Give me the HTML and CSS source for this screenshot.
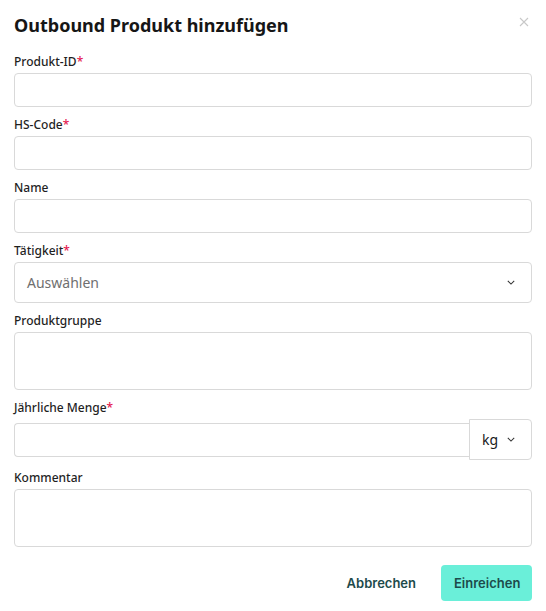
FILE: index.html
```html
<!DOCTYPE html>
<html lang="de">
<head>
<meta charset="utf-8">
<link rel="stylesheet" href="styles.css">
</head>
<body>
<div class="modal">
  <div class="header">
    <h1 class="title">Outbound Produkt hinzufügen</h1>
    <button class="close" aria-label="Schließen">
      <svg width="10" height="10" viewBox="0 0 10 10"><path d="M1 1L9 9M9 1L1 9" stroke="#c8c8c8" stroke-width="1.1" fill="none"/></svg>
    </button>
  </div>
  <form class="form">
    <div class="field">
      <label class="label">Produkt-ID<span class="req">*</span></label>
      <input class="input" type="text">
    </div>
    <div class="field">
      <label class="label">HS-Code<span class="req">*</span></label>
      <input class="input" type="text">
    </div>
    <div class="field">
      <label class="label">Name</label>
      <input class="input" type="text">
    </div>
    <div class="field">
      <label class="label">Tätigkeit<span class="req">*</span></label>
      <div class="select">
        <span class="placeholder">Auswählen</span>
        <svg class="chev" width="8" height="5" viewBox="0 0 10 6"><path d="M1 1L5 5L9 1" stroke="#333" stroke-width="1.3" fill="none"/></svg>
      </div>
    </div>
    <div class="field">
      <label class="label">Produktgruppe</label>
      <div class="textarea"></div>
    </div>
    <div class="field">
      <label class="label">Jährliche Menge<span class="req">*</span></label>
      <div class="group">
        <input class="input grouped" type="text">
        <div class="unit">
          <span>kg</span>
          <svg width="8" height="5" viewBox="0 0 10 6"><path d="M1 1L5 5L9 1" stroke="#333" stroke-width="1.3" fill="none"/></svg>
        </div>
      </div>
    </div>
    <div class="field">
      <label class="label">Kommentar</label>
      <div class="textarea"></div>
    </div>
    <div class="actions">
      <button type="button" class="btn ghost">Abbrechen</button>
      <button type="button" class="btn primary">Einreichen</button>
    </div>
  </form>
</div>
</body>
</html>
```
FILE: styles.css
```css
* { box-sizing: border-box; }
html, body { margin: 0; padding: 0; background: #fff; }
body { font-family: "Noto Sans", "Open Sans", sans-serif; color: #1a1a1a; }
.modal { padding: 12px 14px 10px 14px; width: 546px; }
.header { display: flex; justify-content: space-between; align-items: flex-start; height: 42px; }
.title { margin: 0; font-size: 18px; font-weight: 700; line-height: 26px; color: #161616; }
.close { border: 0; background: none; padding: 0; margin: 5px 3px 0 0; width: 10px; height: 10px; display: flex; }
.form { display: flex; flex-direction: column; }
.field { display: flex; flex-direction: column; margin-bottom: 10px; }
.label { font-size: 12px; line-height: 16px; font-weight: 500; color: #1f1f1f; margin-bottom: 3px; }
.req { color: #e4174f; }
.input { height: 34px; border: 1px solid #d9d9d9; border-radius: 4px; width: 100%; font: inherit; padding: 0 12px; outline: none; }
.select { height: 41px; border: 1px solid #d9d9d9; border-radius: 4px; display: flex; align-items: center; justify-content: space-between; padding: 0 16px 0 12px; }
.placeholder { font-size: 14px; color: #6f6f6f; }
.textarea { height: 58px; border: 1px solid #d9d9d9; border-radius: 4px; }
.group { display: flex; align-items: center; }
.grouped { flex: 1; border-radius: 4px 0 0 4px; border-right: 0; }
.unit { width: 63px; height: 41px; border: 1px solid #d9d9d9; border-radius: 0 4px 4px 0; display: flex; align-items: center; justify-content: center; gap: 9px; font-size: 14px; color: #1a1a1a; padding-right: 4px; }
.actions { display: flex; justify-content: flex-end; gap: 12px; margin-top: 8px; }
.btn { font-family: "Inter", "Noto Sans", sans-serif; font-size: 13px; font-weight: 600; height: 36px; border: 0; border-radius: 4px; color: #1d4b4b; padding: 0 13px; background: none; }
.primary { background: #6aefd9; width: 91px; }
```
